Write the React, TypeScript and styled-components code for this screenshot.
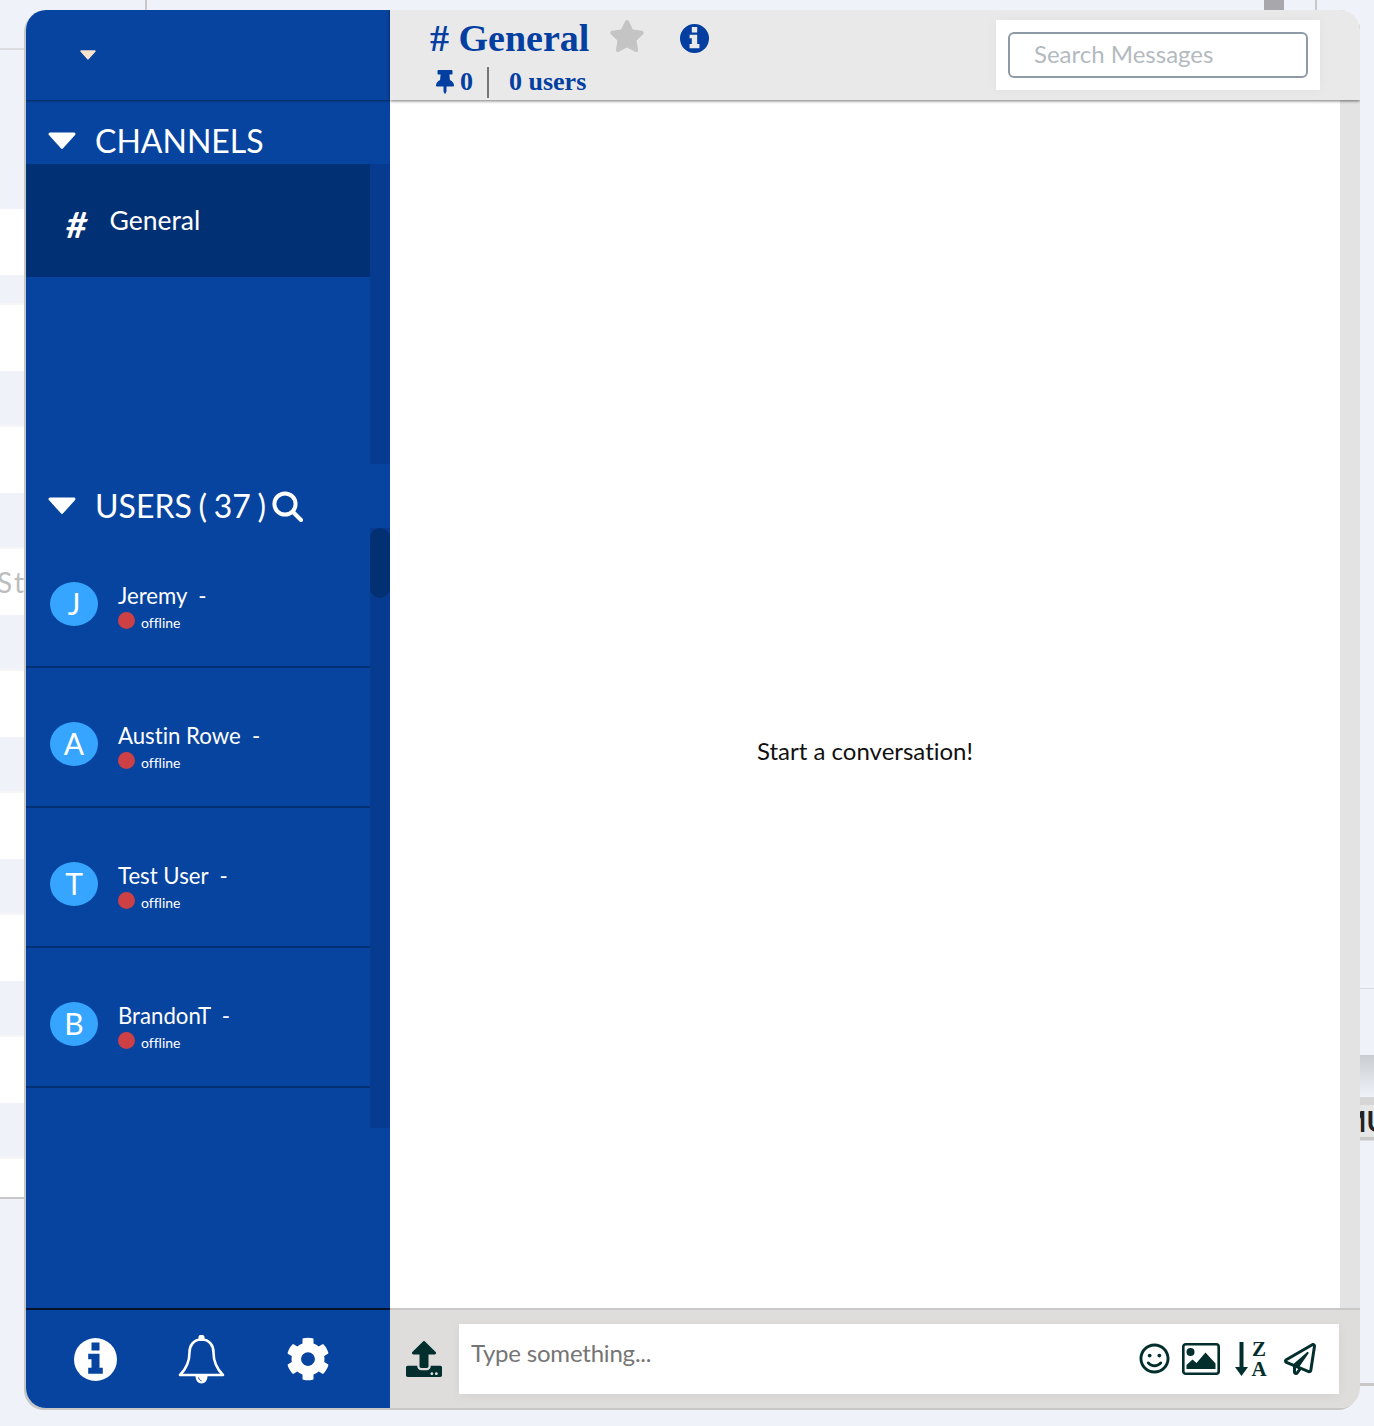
import React from 'react';
import styled, { createGlobalStyle } from 'styled-components';
import { FaCog, FaStar, FaThumbtack, FaUpload, FaRegSmile, FaRegPaperPlane } from 'react-icons/fa';

const users = [
  { name: 'Jeremy', initial: 'J' },
  { name: 'Austin Rowe', initial: 'A' },
  { name: 'Test User', initial: 'T' },
  { name: 'BrandonT', initial: 'B' },
];

const stripes = Array.from({ length: 16 }, (_, i) => i);

const Caret = ({ width, color }: { width: number; color: string }) => (
  <svg width={width} height={width * 0.62} viewBox="0 0 28 17.4" style={{ display: 'block', flexShrink: 0 }}>
    <path d="M2 2h24L14 15.4z" fill={color} stroke={color} strokeWidth="3" strokeLinejoin="round" />
  </svg>
);

const SearchGlyph = () => (
  <svg width="31" height="31" viewBox="0 0 31 31" fill="none" stroke="#fff" strokeWidth="4" strokeLinecap="round">
    <circle cx="13" cy="13" r="10.6" />
    <path d="M21 21l8 8" />
  </svg>
);

const BellGlyph = () => (
  <svg width="47" height="50" viewBox="0 0 47 50" fill="none" stroke="#fff" strokeWidth="2.6" strokeLinejoin="round" style={{ marginTop: 2 }}>
    <circle cx="23.5" cy="2.8" r="1.8" fill="#fff" />
    <path d="M23.5 4.5c-8 0-12 6-12 13 0 10-3 16-9.500 22.500h43c-6.500-6.500-9.500-12.500-9.500-22.500 0-7-4-13-12-13z" />
    <path d="M17.500 41c0 4.500 2.500 7.500 6 7.500s6-3 6-7.500z" fill="#fff" stroke="none" />
    <path d="M20.500 42.500c.4 1.800 1.500 2.900 3 3.300" stroke="#07449f" strokeWidth="1" />
  </svg>
);

const InfoGlyph = ({ size }: { size: number }) => (
  <svg width={size} height={size} viewBox="-21.500 -21.500 43 43" style={{ display: 'block' }}>
    <path
      fill="currentColor"
      fillRule="evenodd"
      d="M0-21.500a21.500 21.500 0 1 0 0 43 21.500 21.500 0 1 0 0-43zM-4-17h8v8h-8zM-7.300-5.700H4V8.300H7.300V14.300H-7.300V8.300H-4V-.2H-7.300z"
    />
  </svg>
);

const ImageGlyph = () => (
  <svg width="38" height="32" viewBox="0 0 38 32" style={{ display: 'block' }}>
    <rect x="1.300" y="1.300" width="35.400" height="29.400" rx="2.500" fill="none" stroke="currentColor" strokeWidth="2.600" />
    <circle cx="8.500" cy="9" r="4" fill="currentColor" />
    <path d="M4.500 26v-4l6-5.500 4 3.500 9-10.500 10 11V26z" fill="currentColor" />
  </svg>
);

const SortGlyph = () => (
  <svg width="31" height="36" viewBox="0 0 31 36" style={{ display: 'block', overflow: 'visible' }}>
    <path d="M4.500 1h4v25h4.500L6.500 35 0 26h4.500z" fill="currentColor" />
    <SortLetter x="24" y="15">Z</SortLetter>
    <SortLetter x="24" y="35">A</SortLetter>
  </svg>
);

export default function App() {
  return (
    <Page>
      <GlobalStyle />
      <Backdrop>
        <LeftRail>
          <RailTop />
          {stripes.map((i) => (
            <Stripe key={i} $white={i % 2 === 0} $short={i === 1}>
              {i === 6 && <CutText>Start</CutText>}
            </Stripe>
          ))}
          <RailEnd />
        </LeftRail>
        <Middle>
          <MarkRow>
            <ThinMark />
            <BlockMark />
            <ThinMark $last />
          </MarkRow>
        </Middle>
        <RightRail>
          <RightBand $height={988} />
          <RightBand $height={67} $light />
          <RightFade />
          <RightLabel>MU</RightLabel>
          <RightBand $height={243} $light />
          <RightLine />
        </RightRail>
      </Backdrop>

      <Modal>
        <Sidebar>
          <SideTop>
            <Caret width={16} color="#f8e4cc" />
          </SideTop>

          <SectionHead>
            <Caret width={28} color="#fff" />
            <SectionTitle>CHANNELS</SectionTitle>
          </SectionHead>
          <ChannelList>
            <ChannelItems>
              <ChannelRow>
                <Hash>#</Hash>
                <ChannelName>General</ChannelName>
              </ChannelRow>
            </ChannelItems>
            <Track />
          </ChannelList>

          <SectionHead $users>
            <Caret width={28} color="#fff" />
            <SectionTitle>USERS ( 37 )</SectionTitle>
            <SearchGlyph />
          </SectionHead>
          <UserList>
            <UserItems>
              {users.map((u) => (
                <UserRow key={u.name}>
                  <Avatar>{u.initial}</Avatar>
                  <UserInfo>
                    <UserName>{u.name}&nbsp; -</UserName>
                    <StatusLine>
                      <StatusDot />
                      <StatusText>offline</StatusText>
                    </StatusLine>
                  </UserInfo>
                </UserRow>
              ))}
            </UserItems>
            <Track>
              <Thumb />
            </Track>
          </UserList>

          <SideSpacer />
          <SideBottom>
            <BottomSlot>
              <InfoGlyph size={43} />
            </BottomSlot>
            <BottomSlot>
              <BellGlyph />
            </BottomSlot>
            <BottomSlot>
              <FaCog size={44} />
            </BottomSlot>
          </SideBottom>
        </Sidebar>

        <Main>
          <Header>
            <HeaderInfo>
              <TitleLine>
                <Title># General</Title>
                <StarSlot>
                  <FaStar size={36} />
                </StarSlot>
                <InfoSlot>
                  <InfoGlyph size={29} />
                </InfoSlot>
              </TitleLine>
              <MetaLine>
                <PinSlot>
                  <FaThumbtack size={24} />
                </PinSlot>
                <MetaText>0</MetaText>
                <MetaDivider />
                <MetaText>0 users</MetaText>
              </MetaLine>
            </HeaderInfo>
            <SearchPanel>
              <SearchInput placeholder="Search Messages" />
            </SearchPanel>
          </Header>

          <Body>
            <Conversation>
              <EmptyText>Start a conversation!</EmptyText>
            </Conversation>
            <Gutter />
          </Body>

          <Composer>
            <UploadSlot>
              <FaUpload size={36} />
            </UploadSlot>
            <InputBox>
              <MessageInput placeholder="Type something..." />
              <Tools>
                <ToolSlot $gap={12}>
                  <FaRegSmile size={31} />
                </ToolSlot>
                <ToolSlot $gap={15}>
                  <ImageGlyph />
                </ToolSlot>
                <ToolSlot $gap={18}>
                  <SortGlyph />
                </ToolSlot>
                <ToolSlot $gap={0}>
                  <FaRegPaperPlane size={32} />
                </ToolSlot>
              </Tools>
            </InputBox>
          </Composer>
        </Main>
      </Modal>
    </Page>
  );
}

const GlobalStyle = createGlobalStyle`
  html, body {
    margin: 0;
    padding: 0;
    background: #eff2f8;
  }
  * {
    box-sizing: border-box;
  }
`;

const Page = styled.div`
  position: relative;
  width: 1374px;
  height: 1426px;
  overflow: hidden;
  font-family: 'Lato', 'Liberation Sans', sans-serif;
  font-variant-ligatures: none;
`;

const Backdrop = styled.div`
  display: flex;
  width: 100%;
  height: 100%;
`;

const LeftRail = styled.div`
  width: 26px;
  display: flex;
  flex-direction: column;
  overflow: hidden;
`;

const RailTop = styled.div`
  height: 209px;
  flex-shrink: 0;
  &::after {
    content: '';
    display: block;
    height: 2px;
    margin-top: 48px;
    background: #dadce0;
  }
`;

const Stripe = styled.div<{ $white: boolean; $short: boolean }>`
  height: ${(p) => (p.$short ? '30px' : p.$white ? '66px' : '56px')};
  flex-shrink: 0;
  background: ${(p) => (p.$white ? '#fff' : '#eff2f8')};
  border-bottom: ${(p) => (p.$white ? 'none' : '2px solid #f6f6f6')};
  display: flex;
  align-items: center;
`;

const CutText = styled.span`
  margin-left: -3px;
  font-size: 28px;
  letter-spacing: 2.500px;
  color: #bdbdbd;
  white-space: nowrap;
`;

const RailEnd = styled.div`
  height: 40px;
  flex-shrink: 0;
  background: #fff;
  border-bottom: 2px solid #c6c6c6;
`;

const Middle = styled.div`
  flex: 1;
`;

const MarkRow = styled.div`
  display: flex;
  height: 10px;
  padding-left: 119px;
`;

const ThinMark = styled.div<{ $last?: boolean }>`
  width: 2px;
  background: #c9c9cc;
  margin-left: ${(p) => (p.$last ? '31px' : '0')};
`;

const BlockMark = styled.div`
  width: 20px;
  background: #a7a7ac;
  margin-left: 1117px;
`;

const RightRail = styled.div`
  width: 14px;
  display: flex;
  flex-direction: column;
`;

const RightBand = styled.div<{ $height: number; $light?: boolean }>`
  height: ${(p) => p.$height}px;
  flex-shrink: 0;
  background: #eff2f8;
  border-top: ${(p) => (p.$light ? '1px solid #d9dbde' : 'none')};
`;

const RightFade = styled.div`
  height: 50px;
  flex-shrink: 0;
  background: linear-gradient(#c9ccd0, #eff2f8);
  border-bottom: 8px solid #d6d6d6;
`;

const RightLabel = styled.div`
  height: 35px;
  flex-shrink: 0;
  overflow: hidden;
  background: #e6e6e6;
  border-bottom: 3px solid #c8c8c8;
  font-size: 28px;
  line-height: 32px;
  font-weight: 700;
  color: #222;
  text-indent: -20px;
  white-space: nowrap;
`;

const RightLine = styled.div`
  height: 3px;
  flex-shrink: 0;
  background: #c6c6c6;
`;

const Modal = styled.div`
  position: absolute;
  left: 26px;
  top: 10px;
  width: 1334px;
  height: 1398px;
  display: grid;
  grid-template-columns: 364px 1fr;
  border-radius: 20px;
  overflow: hidden;
  background: #fff;
  box-shadow: -2px 2px 0 #c6c6c6;
`;

const Sidebar = styled.aside`
  display: flex;
  flex-direction: column;
  background: #07449f;
  color: #fff;
  min-height: 0;
`;

const SideTop = styled.div`
  height: 90px;
  flex-shrink: 0;
  display: flex;
  align-items: center;
  padding: 0 0 0 54px;
  box-shadow: 0 1px 2px rgba(0, 0, 0, 0.45);
`;

const SectionHead = styled.div<{ $users?: boolean }>`
  height: 64px;
  flex-shrink: 0;
  display: flex;
  align-items: center;
  padding-left: 22px;
  padding-top: ${(p) => (p.$users ? '20px' : '18px')};
`;

const SectionTitle = styled.span`
  margin-left: 19px;
  margin-right: 6px;
  font-size: 32px;
  line-height: 36px;
  word-spacing: -1.500px;
  color: #fff;
  white-space: nowrap;
`;

const ChannelList = styled.div`
  height: 300px;
  flex-shrink: 0;
  display: flex;
`;

const ChannelItems = styled.div`
  flex: 1;
`;

const ChannelRow = styled.div`
  height: 113px;
  display: flex;
  align-items: flex-start;
  padding: 38px 0 0 40px;
  background: #023075;
`;

const Hash = styled.span`
  font-size: 37px;
  line-height: 44px;
  font-weight: 700;
  font-style: italic;
`;

const ChannelName = styled.span`
  margin: 2px 0 0 22px;
  font-size: 26.500px;
  line-height: 32px;
`;

const Track = styled.div`
  width: 20px;
  flex-shrink: 0;
  background: #063b90;
`;

const Thumb = styled.div`
  height: 70px;
  border-radius: 10px;
  background: #033073;
`;

const UserList = styled.div`
  height: 600px;
  flex-shrink: 0;
  display: flex;
`;

const UserItems = styled.div`
  flex: 1;
`;

const UserRow = styled.div`
  height: 140px;
  display: flex;
  align-items: flex-start;
  padding: 54px 0 0 24px;
  border-bottom: 2px solid #033073;
`;

const Avatar = styled.div`
  width: 48px;
  height: 44px;
  flex-shrink: 0;
  border-radius: 50%;
  background: #36a5ff;
  color: #fff;
  font-size: 30px;
  padding-bottom: 3px;
  display: flex;
  align-items: center;
  justify-content: center;
`;

const UserInfo = styled.div`
  margin-left: 20px;
`;

const UserName = styled.div`
  font-size: 22.200px;
  line-height: 28px;
  white-space: nowrap;
`;

const StatusLine = styled.div`
  display: flex;
  align-items: center;
`;

const StatusDot = styled.span`
  width: 17px;
  height: 17px;
  border-radius: 50%;
  background: #cc4046;
`;

const StatusText = styled.span`
  margin-left: 6px;
  margin-top: 4px;
  font-size: 14px;
  line-height: 17px;
`;

const SideSpacer = styled.div`
  flex: 1;
`;

const SideBottom = styled.div`
  height: 100px;
  flex-shrink: 0;
  display: grid;
  grid-template-columns: 106px 106px 108px;
  align-items: center;
  padding-left: 16px;
  border-top: 2px solid #04122b;
`;

const BottomSlot = styled.div`
  display: flex;
  align-items: center;
  justify-content: center;
`;

const Main = styled.main`
  display: flex;
  flex-direction: column;
  min-width: 0;
  min-height: 0;
`;

const Header = styled.header`
  position: relative;
  z-index: 1;
  height: 90px;
  flex-shrink: 0;
  display: flex;
  justify-content: space-between;
  background: #e9e9e9;
  box-shadow: 0 1px 3px rgba(0, 0, 0, 0.55);
  padding: 10px 40px 0 40px;
  font-family: 'Liberation Serif', serif;
  font-weight: 700;
  color: #033ea1;
`;

const HeaderInfo = styled.div`
  display: flex;
  flex-direction: column;
`;

const TitleLine = styled.div`
  display: flex;
  align-items: center;
  height: 38px;
  margin-top: -1px;
`;

const Title = styled.h1`
  margin: 0;
  font-size: 38px;
  line-height: 38px;
  white-space: nowrap;
`;

const StarSlot = styled.span`
  display: flex;
  margin-left: 20px;
  margin-top: -4px;
  color: #c4c4c4;
`;

const InfoSlot = styled.span`
  display: flex;
  margin-left: 35px;
`;

const MetaLine = styled.div`
  display: flex;
  align-items: center;
  height: 32px;
  margin-top: 9px;
  padding-left: 5px;
`;

const PinSlot = styled.span`
  display: flex;
  margin: 0 3px 0 -2px;
`;

const MetaText = styled.span`
  font-size: 26px;
  line-height: 32px;
  white-space: nowrap;
`;

const MetaDivider = styled.span`
  width: 2px;
  height: 31px;
  margin: 0 20px 0 14px;
  background: #777;
`;

const SearchPanel = styled.div`
  width: 324px;
  height: 70px;
  padding: 12px;
  background: #fff;
  box-shadow: 0 0 12px rgba(0, 0, 0, 0.04);
`;

const SearchInput = styled.input`
  width: 300px;
  height: 46px;
  padding: 0 0 3px 24px;
  border: 2px solid #8e9aa5;
  border-radius: 6px;
  outline: none;
  background: #fff;
  font-family: 'Lato', 'Liberation Sans', sans-serif;
  font-size: 24px;
  &::placeholder {
    color: #b3bac0;
    opacity: 1;
  }
`;

const Body = styled.section`
  flex: 1;
  display: flex;
  min-height: 0;
`;

const Conversation = styled.div`
  flex: 1;
  display: flex;
  align-items: center;
  justify-content: center;
  padding-top: 92px;
  background: #fff;
`;

const EmptyText = styled.p`
  margin: 0;
  font-size: 24px;
  color: #111;
`;

const Gutter = styled.div`
  width: 20px;
  background: #e3e3e3;
`;

const Composer = styled.footer`
  height: 100px;
  flex-shrink: 0;
  display: flex;
  padding: 14px 21px 14px 16px;
  background: #dedddb;
  border-top: 2px solid #c8c8c8;
`;

const UploadSlot = styled.div`
  width: 53px;
  flex-shrink: 0;
  display: flex;
  align-items: center;
  color: #032e2e;
`;

const InputBox = styled.div`
  flex: 1;
  display: flex;
  align-items: center;
  background: #fff;
  box-shadow: 0 2px 10px rgba(0, 0, 0, 0.05);
`;

const MessageInput = styled.input`
  flex: 1;
  min-width: 0;
  height: 100%;
  padding: 0 0 14px 12px;
  border: none;
  outline: none;
  background: transparent;
  font-family: 'Lato', 'Liberation Sans', sans-serif;
  font-size: 24px;
  letter-spacing: -0.200px;
  &::placeholder {
    color: #757575;
    opacity: 1;
  }
`;

const Tools = styled.div`
  display: flex;
  align-items: center;
  padding-right: 23px;
  margin-top: -1px;
  color: #032e2e;
`;

const ToolSlot = styled.span<{ $gap: number }>`
  display: flex;
  margin-right: ${(p) => p.$gap}px;
`;

const SortLetter = styled.text`
  font-family: 'Liberation Serif', serif;
  font-size: 21px;
  font-weight: 700;
  text-anchor: middle;
  fill: currentColor;
`;
